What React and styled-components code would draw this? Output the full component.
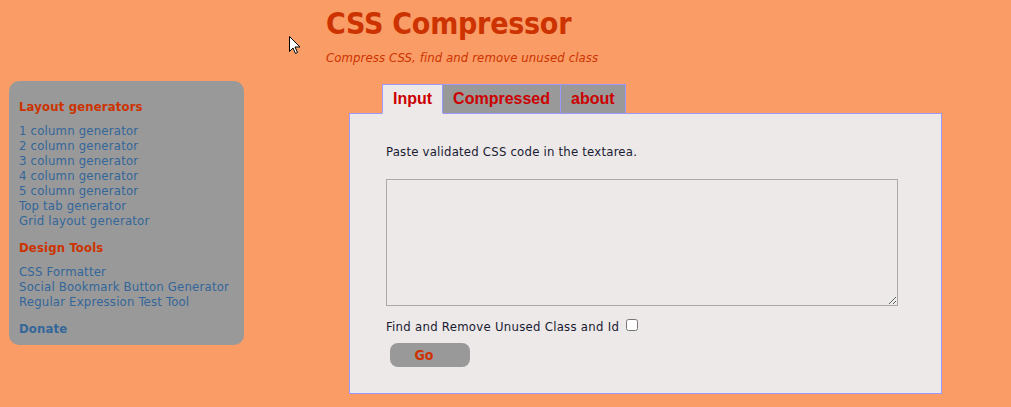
import React from "react";
import styled, { createGlobalStyle } from "styled-components";

const Global = createGlobalStyle`
  html, body { margin: 0; padding: 0; }
  body {
    background: #fa9c66;
    font-family: "DejaVu Sans Condensed", "DejaVu Sans", sans-serif;
    width: 1011px;
    height: 407px;
    overflow: hidden;
  }
`;

const Page = styled.div`
  position: relative;
  display: flex;
  flex-direction: column;
`;

const Header = styled.header`
  padding: 6px 0 0 326px;
  height: 75px;
  box-sizing: border-box;
`;

const Title = styled.h1`
  margin: 0;
  font-size: 30px;
  line-height: 36px;
  font-weight: bold;
  letter-spacing: -0.25px;
  color: #cc3300;
`;

const Subtitle = styled.p`
  margin: 8px 0 0;
  font-size: 13px;
  font-style: italic;
  font-weight: normal;
  letter-spacing: 0.1px;
  color: #cc3300;
`;

const Body = styled.div`
  display: flex;
  align-items: flex-start;
  padding-left: 9px;
`;

const Sidebar = styled.nav`
  width: 235px;
  height: 264px;
  margin-top: 6px;
  box-sizing: border-box;
  background: #999999;
  border-radius: 10px;
  padding: 18px 10px 0;
`;

const SideHeading = styled.h3`
  margin: ${(p) => (p.$first ? "0" : "12px")} 0 9px;
  font-size: 13px;
  line-height: 15px;
  font-weight: bold;
  letter-spacing: 0.15px;
  color: ${(p) => (p.$link ? "#336699" : "#cc3300")};
`;

const SideLink = styled.a`
  display: block;
  font-size: 13px;
  line-height: 15px;
  letter-spacing: 0.2px;
  color: #336699;
  text-decoration: none;
`;

const Main = styled.div`
  margin-left: 105px;
  margin-top: 9px;
  display: flex;
  flex-direction: column;
`;

const Tabs = styled.div`
  display: flex;
  margin-left: 33px;
  margin-bottom: -1px;
  position: relative;
  z-index: 1;
`;

const Tab = styled.div`
  height: 30px;
  box-sizing: border-box;
  padding: 0 10px;
  display: flex;
  align-items: center;
  font-family: "Liberation Sans", Arial, sans-serif;
  font-size: 16px;
  font-weight: bold;
  color: #cc0000;
  background: ${(p) => (p.$active ? "#ece9e8" : "#999999")};
  border: 1px solid #9999ff;
  border-bottom: ${(p) => (p.$active ? "1px solid #ece9e8" : "1px solid #9999ff")};
  & + & { border-left: none; }
`;

const Panel = styled.section`
  width: 593px;
  height: 281px;
  box-sizing: border-box;
  background: #ece9e8;
  border: 1px solid #9999ff;
  padding: 30px 0 0 36px;
`;

const Text = styled.p`
  margin: 0;
  font-size: 13px;
  line-height: 15px;
  letter-spacing: 0.22px;
  color: #1a1a33;
`;

const Area = styled.textarea`
  display: block;
  margin-top: 20px;
  width: 512px;
  height: 127px;
  box-sizing: border-box;
  background: #ece9e8;
  border: 1px solid #aaaaaa;
  resize: both;
`;

const CheckRow = styled.label`
  display: flex;
  align-items: center;
  gap: 7px;
  margin-top: 13px;
  font-size: 13px;
  line-height: 15px;
  letter-spacing: 0.28px;
  color: #1a1a33;
`;

const Check = styled.input`
  margin: 0 0 3px;
  width: 12px;
  height: 12px;
`;

const GoButton = styled.button`
  margin: 9px 0 0 4px;
  width: 80px;
  height: 24px;
  border: none;
  border-radius: 8px;
  background: #999999;
  color: #cc3300;
  font-family: "DejaVu Sans Condensed", "DejaVu Sans", sans-serif;
  font-size: 14px;
  font-weight: bold;
  padding: 0 12px 0 0;
`;

const Cursor = styled.svg`
  position: absolute;
  left: 289px;
  top: 36px;
`;

export default function App() {
  return (
    <>
      <Global />
      <Page>
        <Header>
          <Title>CSS Compressor</Title>
          <Subtitle>Compress CSS, find and remove unused class</Subtitle>
        </Header>
        <Body>
          <Sidebar>
            <SideHeading $first>Layout generators</SideHeading>
            <SideLink href="#">1 column generator</SideLink>
            <SideLink href="#">2 column generator</SideLink>
            <SideLink href="#">3 column generator</SideLink>
            <SideLink href="#">4 column generator</SideLink>
            <SideLink href="#">5 column generator</SideLink>
            <SideLink href="#">Top tab generator</SideLink>
            <SideLink href="#">Grid layout generator</SideLink>
            <SideHeading>Design Tools</SideHeading>
            <SideLink href="#">CSS Formatter</SideLink>
            <SideLink href="#">Social Bookmark Button Generator</SideLink>
            <SideLink href="#">Regular Expression Test Tool</SideLink>
            <SideHeading $link>Donate</SideHeading>
          </Sidebar>
          <Main>
            <Tabs>
              <Tab $active>Input</Tab>
              <Tab>Compressed</Tab>
              <Tab>about</Tab>
            </Tabs>
            <Panel>
              <Text>Paste validated CSS code in the textarea.</Text>
              <Area />
              <CheckRow>
                Find and Remove Unused Class and Id
                <Check type="checkbox" />
              </CheckRow>
              <GoButton>Go</GoButton>
            </Panel>
          </Main>
        </Body>
        <Cursor width="12" height="19" viewBox="0 0 12 19">
          <path d="M0.5 0.5 L0.5 15.5 L4 12 L6.5 17.5 L8.5 16.5 L6 11 L11 11 Z" fill="#fff" stroke="#000" strokeWidth="1" />
        </Cursor>
      </Page>
    </>
  );
}
